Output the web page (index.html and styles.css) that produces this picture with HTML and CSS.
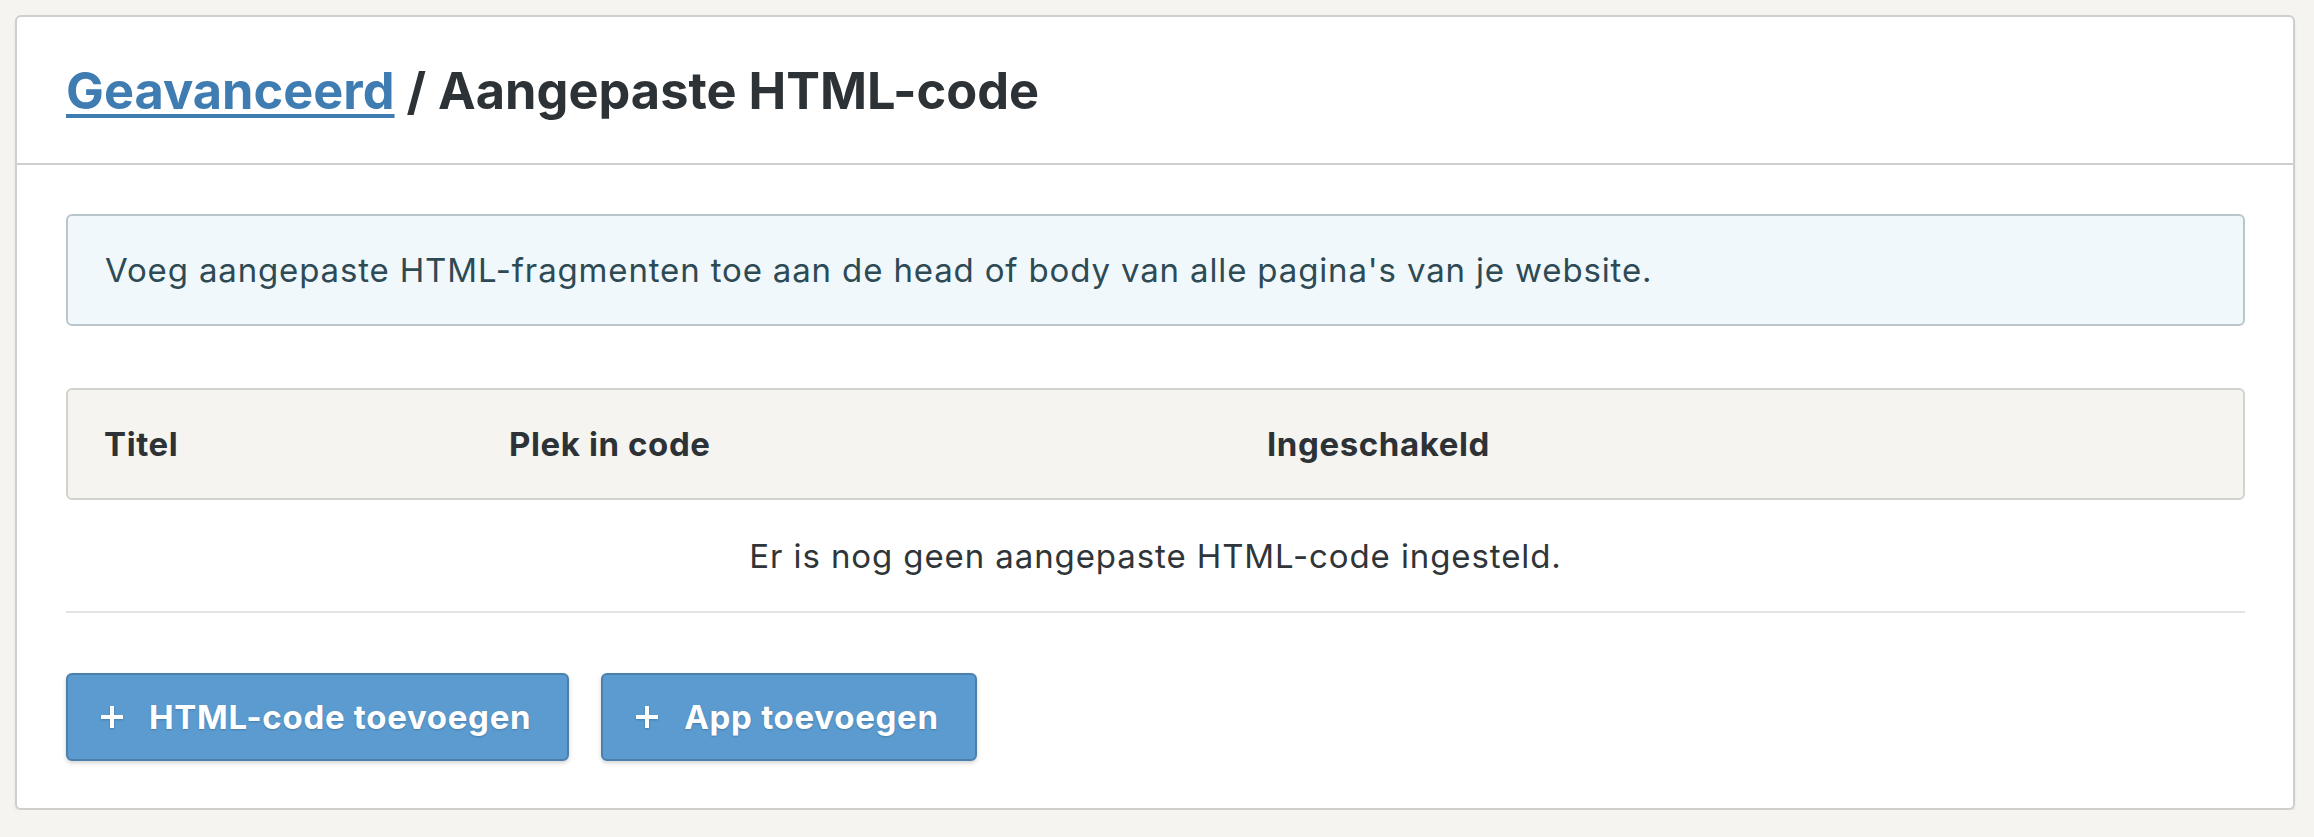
FILE: index.html
```html
<!DOCTYPE html>
<html lang="nl">
<head>
    <meta charset="UTF-8">
    <meta name="viewport" content="width=device-width, initial-scale=1.0">
    <title>Aangepaste HTML-code</title>
    <link rel="stylesheet" href="styles.css">
</head>
<body>
    <div class="card">
        <div class="card-header">
            <h1><a href="#">Geavanceerd</a> / Aangepaste HTML-code</h1>
        </div>

        <div class="card-body">
            <div class="notice">
                Voeg aangepaste HTML-fragmenten toe aan de head of body van alle pagina's van je website.
            </div>

            <div class="table">
                <div class="table-head">
                    <div class="col col-title">Titel</div>
                    <div class="col col-place">Plek in code</div>
                    <div class="col col-enabled">Ingeschakeld</div>
                </div>
                <div class="table-empty">Er is nog geen aangepaste HTML-code ingesteld.</div>
            </div>

            <div class="actions">
                <button class="btn">
                    <svg class="plus" viewBox="0 0 26 26"><path d="M13 2v22M2 13h22"/></svg>
                    HTML-code toevoegen
                </button>
                <button class="btn">
                    <svg class="plus" viewBox="0 0 26 26"><path d="M13 2v22M2 13h22"/></svg>
                    App toevoegen
                </button>
            </div>
        </div>
    </div>
</body>
</html>
```

FILE: styles.css
```css
body {
    margin: 0;
    padding: 15px 19px 0 15px;
    background: #f5f4f0;
    color: #2c3236;
    font-family: Inter, Lato, sans-serif;
}

.card {
    background: #fff;
    border: 2px solid #cfd0ce;
    border-radius: 6px;
    box-shadow: 0 2px 3px rgba(0, 0, 0, 0.08);
}

.card-header {
    height: 146px;
    padding: 0 49px;
    display: flex;
    align-items: center;
    border-bottom: 2px solid #cfd0ce;
}

.card-header h1 {
    margin: 0;
    font-size: 50.5px;
    font-weight: 700;
    color: #2c3236;
}

.card-header h1 a {
    color: #3e7cb1;
    text-decoration: underline;
    text-decoration-thickness: 4px;
    text-underline-offset: 5px;
}

.card-body {
    padding: 49px 48px 47px 49px;
}

.notice {
    height: 108px;
    padding: 0 37px;
    display: flex;
    align-items: center;
    background: #f0f8fb;
    border: 2px solid #b9c7cd;
    border-radius: 6px;
    color: #2e4a54;
    font-size: 33px;
    letter-spacing: 0.85px;
}

.table {
    margin-top: 62px;
}

.table-head {
    height: 108px;
    display: flex;
    align-items: center;
    background: #f5f4f1;
    border: 2px solid #d2d2cf;
    border-radius: 6px;
    font-size: 33px;
    font-weight: 700;
    letter-spacing: 0.6px;
}

.col {
    padding-left: 36px;
    box-sizing: border-box;
}

.col-title {
    width: 405px;
}

.col-place {
    width: 758px;
}

.table-empty {
    height: 111px;
    display: flex;
    align-items: center;
    justify-content: center;
    border-bottom: 2px solid #e3e3e3;
    font-size: 33px;
    letter-spacing: 0.9px;
    color: #2f3538;
}

.actions {
    margin-top: 60px;
    display: flex;
    gap: 32px;
}

.btn {
    height: 88px;
    padding: 0 36px 0 31px;
    display: flex;
    align-items: center;
    gap: 24px;
    background: #5b9bcf;
    border: 2px solid #4b80ad;
    border-radius: 6px;
    box-shadow: 0 2px 4px rgba(0, 0, 0, 0.18);
    color: #fff;
    font-family: inherit;
    font-size: 33px;
    font-weight: 700;
    letter-spacing: 0.7px;
    text-shadow: 0 1px 2px rgba(0, 0, 0, 0.2);
    cursor: pointer;
}

.plus {
    width: 26px;
    height: 26px;
    fill: none;
    stroke: #fff;
    stroke-width: 4;
    filter: drop-shadow(0 1px 1px rgba(0, 0, 0, 0.2));
}
```
